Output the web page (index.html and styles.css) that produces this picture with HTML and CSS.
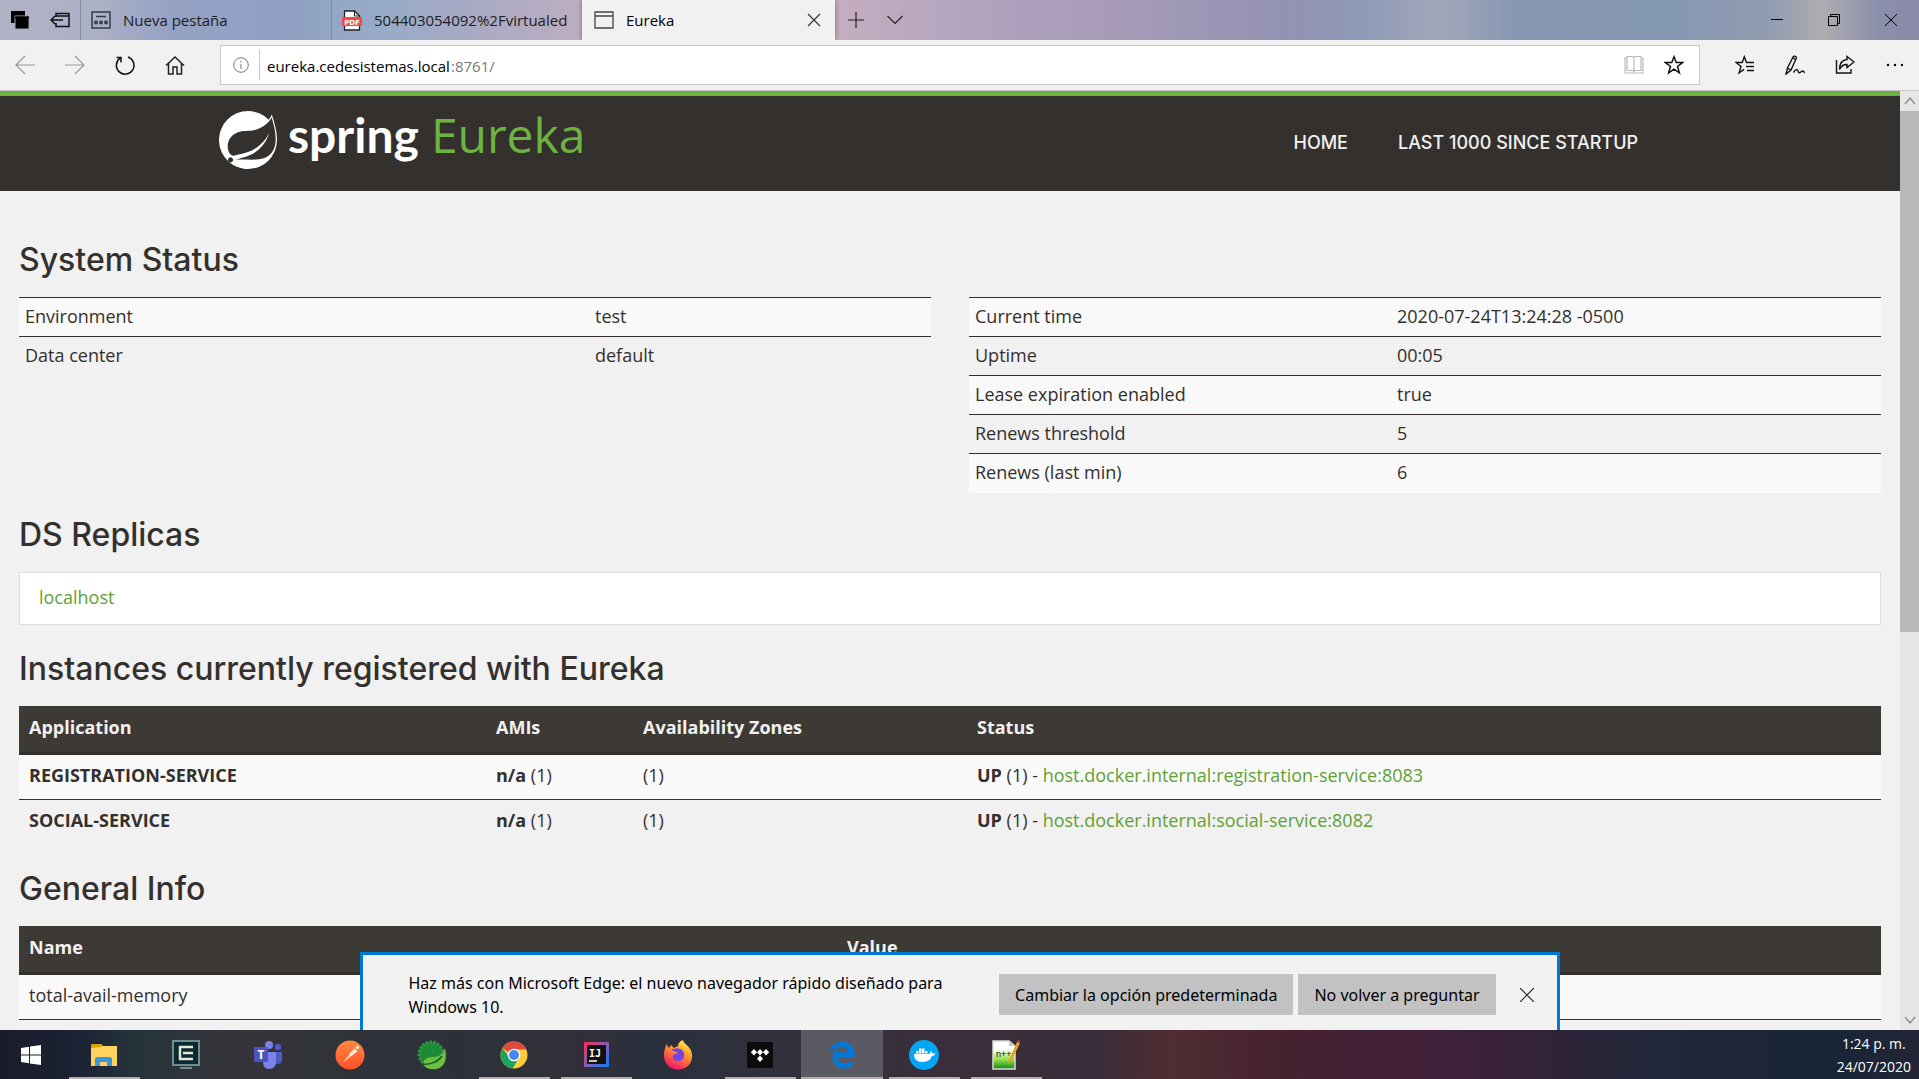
FILE: index.html
```html
<!DOCTYPE html>
<html lang="es">
<head>
<meta charset="utf-8">
<title>Eureka</title>
<link rel="stylesheet" href="styles.css">
</head>
<body>
<header class="tabs">
  <div class="tab-tools">
    <button class="icon-btn" aria-label="Pestañas reservadas"><svg width="20" height="20" viewBox="0 0 20 20"><path d="M1 1h14v12H1z"/><path d="M5 6h14v13H5z" stroke="#9fa5bb" stroke-width="1"/><path d="M5 7.500h14" stroke="#000" stroke-width="2"/></svg></button>
    <button class="icon-btn" aria-label="Reservar pestañas"><svg width="20" height="20" viewBox="0 0 20 20" fill="none" stroke="#111" stroke-width="1.500"><path d="M6 7V3.500h13v13H6V13M6 6h13M1 10h12M5 6l-4 4 4 4"/></svg></button>
  </div>
  <button class="tab">
    <svg width="20" height="18" viewBox="0 0 20 18" fill="none" stroke="#333a4c" stroke-width="1.500"><path d="M1 1h18v16H1zM5 5.500h10"/><path d="M4 10.500h2v2H4zM9 10.500h2v2H9zM14 10.500h2v2h-2z"/></svg>
    <span class="tab-title">Nueva pestaña</span>
  </button>
  <button class="tab">
    <svg width="20" height="21" viewBox="0 0 20 21"><path d="M2.500 1h10l5 5v14h-15z" fill="#fff" stroke="#222" stroke-width="1.300"/><path d="M12.500 1v5h5" fill="none" stroke="#222"/><path d="M0 7h20v9H0z" fill="#f5484b"/><text x="10" y="14.500" font-family="DejaVu Sans" font-weight="bold" font-size="7" fill="#fff" text-anchor="middle">PDF</text></svg>
    <span class="tab-title">504403054092%2Fvirtualed</span>
  </button>
  <div class="tab tab-active">
    <svg width="20" height="18" viewBox="0 0 20 18" fill="none" stroke="#444" stroke-width="1.300"><path d="M1 1h18v16H1zM1 5h18"/></svg>
    <span class="tab-title">Eureka</span>
    <button class="icon-btn tab-close" aria-label="Cerrar pestaña"><svg width="14" height="14" viewBox="0 0 14 14" fill="none" stroke="#333" stroke-width="1.200"><path d="M1 1l12 12M13 1L1 13"/></svg></button>
  </div>
  <div class="tab-new">
    <button class="icon-btn" aria-label="Nueva pestaña"><svg width="18" height="18" viewBox="0 0 18 18" fill="none" stroke="#222" stroke-width="1.200"><path d="M9 1v16M1 9h16"/></svg></button>
    <button class="icon-btn" aria-label="Vistas previas"><svg width="18" height="18" viewBox="0 0 18 18" fill="none" stroke="#222" stroke-width="1.200"><path d="M1.500 5L9 12.500 16.500 5"/></svg></button>
  </div>
  <div class="window-tools">
    <button class="icon-btn" aria-label="Minimizar"><svg width="12" height="12" viewBox="0 0 12 12" stroke="#000"><path d="M0 5.500h12"/></svg></button>
    <button class="icon-btn" aria-label="Restaurar"><svg width="12" height="12" viewBox="0 0 12 12" fill="none" stroke="#000"><path d="M.5 2.500h9v9h-9zM2.500 2.500v-2h9v9h-2"/></svg></button>
    <button class="icon-btn" aria-label="Cerrar"><svg width="12" height="12" viewBox="0 0 12 12" stroke="#000"><path d="M0 0l12 12M12 0L0 12"/></svg></button>
  </div>
</header>

<div class="toolbar">
  <div class="nav-tools">
    <button class="icon-btn" aria-label="Atrás"><svg width="20" height="20" viewBox="0 0 20 20" fill="none" stroke="#999" stroke-width="1.200"><path d="M20 10H1M10 1l-9 9 9 9"/></svg></button>
    <button class="icon-btn" aria-label="Adelante"><svg width="20" height="20" viewBox="0 0 20 20" fill="none" stroke="#999" stroke-width="1.200"><path d="M0 10h19M10 1l9 9-9 9"/></svg></button>
    <button class="icon-btn" aria-label="Actualizar"><svg width="20" height="20" viewBox="0 0 20 20" fill="none" stroke="#111" stroke-width="1.500"><path d="M5 3.200A8.800 8.800 0 1 0 13 2M1.500 2.500h4.500v5"/></svg></button>
    <button class="icon-btn" aria-label="Inicio"><svg width="20" height="20" viewBox="0 0 20 20" fill="none" stroke="#222" stroke-width="1.500"><path d="M1 10.500L10 2l9 8.500M3.500 8.500V19H8v-7h4v7h4.500V8.500"/></svg></button>
  </div>
  <div class="address">
    <svg class="info" width="16" height="16" viewBox="0 0 16 16" fill="none" stroke="#777"><circle cx="8" cy="8" r="7.300"/><path d="M8 7v5M8 4v1.500"/></svg>
    <div class="address-text">
      <input class="address-input" aria-label="Dirección" value="eureka.cedesistemas.local"><span class="address-port">:8761/</span>
    </div>
    <button class="icon-btn" aria-label="Vista de lectura"><svg width="20" height="20" viewBox="0 0 20 20" fill="none" stroke="#bbb" stroke-width="1.200"><path d="M3 3H1v15h18V3h-2M3 1.500h6l1 1 1-1h6v14h-6l-1 1-1-1H3zM10 2.500v15"/></svg></button>
    <button class="icon-btn" aria-label="Favorito"><svg width="20" height="20" viewBox="0 0 20 20" fill="none" stroke="#111" stroke-width="1.500"><path d="M10 1.800l2.200 5.800h6.300l-5 3.900 1.900 6.400L10 14.200l-5.400 3.700 1.900-6.400-5-3.900h6.300z"/></svg></button>
  </div>
  <div class="page-tools">
    <button class="icon-btn" aria-label="Centro"><svg width="20" height="20" viewBox="0 0 20 20" fill="none" stroke="#111" stroke-width="1.400"><path d="M19 7.500h-7.500L9.300 1.800 7.200 7.500H1l5 4-1.900 6.400 5-3.500M11 11.500h8M12 15.500h7"/></svg></button>
    <button class="icon-btn" aria-label="Notas"><svg width="20" height="20" viewBox="0 0 20 20" fill="none" stroke="#111" stroke-width="1.400"><path d="M1 19l1.500-6L8 2c1-1.500 4-.5 3.200 1.500L6 15zM7 2.500l3.500 2M2.500 13L6 15M1 19l5-4M8.500 17.500c2-3 4-4 4.500-1.500s2 2 3.500.5 2.500 1 3.500 1"/></svg></button>
    <button class="icon-btn" aria-label="Compartir"><svg width="20" height="20" viewBox="0 0 20 20" fill="none" stroke="#111" stroke-width="1.400"><path d="M1.500 5v13H16v-4M12 1.500l7 5.500-7 5.500v-3c-4 0-6 1.500-7.500 5 0-6 2.500-9.500 7.500-10z"/></svg></button>
    <button class="icon-btn" aria-label="Más"><svg width="20" height="20" viewBox="0 0 20 20"><circle cx="3" cy="10" r="1.200"/><circle cx="10" cy="10" r="1.200"/><circle cx="17" cy="10" r="1.200"/></svg></button>
  </div>
</div>

<div class="viewport">
  <div class="page">
    <nav class="site-header">
      <div class="site-container">
        <a class="brand" href="#">
          <svg width="58" height="58" viewBox="0 0 24 24" fill="#fff"><path d="M21.854 1.416a10.450 10.450 0 0 1-1.284 2.247A11.967 11.967 0 1 0 3.852 20.776l.4445.3951a11.954 11.954 0 0 0 19.632-8.297c.3457-3.013-.568-6.865-2.074-11.458zM5.580 20.875a1.017 1.017 0 1 1-.1482-1.432 1.040 1.040 0 0 1 .1482 1.432zm16.199-3.581c-2.939 3.926-9.260 2.593-13.285 2.790 0 0-.7161.0494-1.432.1481 0 0 .2717-.1234.6174-.2469 2.840-.9877 4.173-1.185 5.902-2.074 3.235-1.655 6.470-5.284 7.112-9.038-1.235 3.605-4.988 6.717-8.396 7.976-2.346.8643-6.569 1.704-6.569 1.704l-.1729-.0988c-2.865-1.408-2.963-7.630 2.272-9.631 2.297-.889 4.470-.395 6.964-.9877 2.642-.6174 5.704-2.593 6.939-5.186 1.383 4.173 3.062 10.643.0493 14.643z"/></svg>
          <span class="brand-spring">spring</span>
          <span class="brand-eureka">Eureka</span>
        </a>
        <div class="site-nav">
          <a href="#">HOME</a>
          <a href="#">LAST 1000 SINCE STARTUP</a>
        </div>
      </div>
    </nav>
    <main class="content">
      <h1>System Status</h1>
      <div class="status">
        <table class="facts facts-left">
          <tr><td>Environment</td><td>test</td></tr>
          <tr><td>Data center</td><td>default</td></tr>
        </table>
        <table class="facts facts-right">
          <tr><td>Current time</td><td>2020-07-24T13:24:28 -0500</td></tr>
          <tr><td>Uptime</td><td>00:05</td></tr>
          <tr><td>Lease expiration enabled</td><td>true</td></tr>
          <tr><td>Renews threshold</td><td>5</td></tr>
          <tr><td>Renews (last min)</td><td>6</td></tr>
        </table>
      </div>
      <h1>DS Replicas</h1>
      <ul class="replicas"><li><a href="#">localhost</a></li></ul>
      <h1>Instances currently registered with Eureka</h1>
      <table class="data instances">
        <thead><tr><th>Application</th><th>AMIs</th><th>Availability Zones</th><th>Status</th></tr></thead>
        <tbody>
          <tr><td><b>REGISTRATION-SERVICE</b></td><td><b>n/a</b> (1)</td><td>(1)</td><td><b>UP</b> (1) - <a href="#">host.docker.internal:registration-service:8083</a></td></tr>
          <tr><td><b>SOCIAL-SERVICE</b></td><td><b>n/a</b> (1)</td><td>(1)</td><td><b>UP</b> (1) - <a href="#">host.docker.internal:social-service:8082</a></td></tr>
        </tbody>
      </table>
      <h1>General Info</h1>
      <table class="data general">
        <thead><tr><th>Name</th><th>Value</th></tr></thead>
        <tbody>
          <tr><td>total-avail-memory</td><td></td></tr>
          <tr><td></td><td></td></tr>
        </tbody>
      </table>
    </main>
  </div>
  <div class="scrollbar">
    <svg class="scroll-arrow" width="19" height="20" viewBox="0 0 19 20" fill="none" stroke="#888" stroke-width="1.300"><path d="M5 13l5-6 5 6"/></svg>
    <div class="scroll-thumb"></div>
    <svg class="scroll-arrow scroll-down" width="19" height="20" viewBox="0 0 19 20" fill="none" stroke="#888" stroke-width="1.300"><path d="M5 7l5 6 5-6"/></svg>
  </div>
  <div class="notice">
    <p class="notice-text">Haz más con Microsoft Edge: el nuevo navegador rápido diseñado para Windows 10.</p>
    <div class="notice-actions">
      <button class="notice-btn">Cambiar la opción predeterminada</button>
      <button class="notice-btn">No volver a preguntar</button>
    </div>
    <button class="icon-btn" aria-label="Cerrar aviso"><svg width="14" height="14" viewBox="0 0 14 14" fill="none" stroke="#222" stroke-width="1.200"><path d="M0 0l14 14M14 0L0 14"/></svg></button>
  </div>
</div>

<footer class="taskbar">
  <button class="task task-start" aria-label="Inicio de Windows"><svg width="20" height="20" viewBox="0 0 20 20" fill="#fff"><path d="M0 3l8-1.200v7.700H0zM9 1.600L20 0v9.500H9zM0 10.500h8v7.700L0 17zM9 10.500h11V20L9 18.400z"/></svg></button>
  <button class="task task-open" aria-label="Explorador"><svg width="26" height="24" viewBox="0 0 26 24"><path d="M0 1h10l2 2h14v20H0z" fill="#ffd45e"/><path d="M0 1h10l1 1v2L0 5z" fill="#e0a100"/><path d="M4 23v-7q0-2 2-2h13q2 0 2 2v7h-5v-4H9v4z" fill="#3a97dc"/></svg></button>
  <button class="task" aria-label="Consola"><svg width="28" height="30" viewBox="0 0 28 30"><path d="M1 1h26v24H1z" fill="#082a33" stroke="#6f8d92" stroke-width="2"/><path d="M8 28h12" stroke="#6f8d92" stroke-width="2"/><path d="M21 7H8v12h13M11 13h10" fill="none" stroke="#e9e5d4" stroke-width="2.500"/></svg></button>
  <button class="task" aria-label="Teams"><svg width="28" height="28" viewBox="0 0 28 28"><circle cx="24" cy="6" r="3.200" fill="#5059c9"/><path d="M19 11h9v8q0 4-5 4h-4z" fill="#5059c9"/><circle cx="15" cy="4" r="4" fill="#7b83eb"/><path d="M9 11h13v9q0 8-7 8-6 0-6-7z" fill="#7b83eb"/><rect y="6" width="14" height="15" rx="1" fill="#4b53bc"/><text x="7" y="18" font-family="Open Sans" font-weight="bold" font-size="12" fill="#fff" text-anchor="middle">T</text></svg></button>
  <button class="task" aria-label="Postman"><svg width="30" height="30" viewBox="0 0 30 30"><defs><linearGradient id="pm" x2="0" y2="1"><stop stop-color="#ff8a3d"/><stop offset="1" stop-color="#ff4f28"/></linearGradient></defs><circle cx="15" cy="15" r="14.500" fill="url(#pm)"/><path d="M7 23.500l8-9.500 1.500 1.500z" fill="#ffe2d2"/><path d="M14.500 14l5-5 2.500 2-6 5z" fill="#ffe2d2" stroke="#fff" stroke-width=".8"/><circle cx="22.500" cy="7.500" r="1.800" fill="#ffe2d2"/></svg></button>
  <button class="task" aria-label="Spring Tools"><svg width="30" height="30" viewBox="0 0 30 30"><circle cx="14" cy="14" r="12" fill="#1f8a35" stroke="#2e9a3c" stroke-width="3" stroke-dasharray="2.500 1.400"/><path d="M28 8c2 10 1 18-8 21-6 1-11 0-13-4-2-6 4-8 10-8 5 0 9-3 11-9z" fill="#6fbe44"/><path d="M5 24c8 1 16-2 20-8" fill="none" stroke="#15602a" stroke-width="1.500"/></svg></button>
  <button class="task task-open" aria-label="Chrome"><svg width="28" height="28" viewBox="0 0 28 28"><circle cx="14" cy="14" r="13.500" fill="#ffcd40"/><path d="M14 14L2.300 7.200A13.500 13.500 0 0 1 26.400 8.500H14z" fill="#dd4b3e"/><path d="M2.300 7.200A13.500 13.500 0 0 0 12.500 27.400L19 17l-8 1z" fill="#1aa260"/><circle cx="14" cy="14" r="6.300" fill="#fff"/><circle cx="14" cy="14" r="5" fill="#4688f1"/></svg></button>
  <button class="task task-open" aria-label="IntelliJ IDEA"><svg width="25" height="25" viewBox="0 0 25 25"><defs><linearGradient id="ij" y2="1"><stop stop-color="#fe2857"/><stop offset=".5" stop-color="#8a5bb0"/><stop offset="1" stop-color="#087cfa"/></linearGradient></defs><path d="M0 0h25v25H0z" fill="url(#ij)"/><path d="M3 3h19v19H3z" fill="#111"/><text x="5" y="15" font-family="DejaVu Sans Mono" font-weight="bold" font-size="10" fill="#fff">IJ</text><path d="M5 19h8" stroke="#fff" stroke-width="1.500"/></svg></button>
  <button class="task" aria-label="Firefox"><svg width="30" height="30" viewBox="0 0 30 30"><defs><linearGradient id="ff" x1=".8" x2=".3" y2="1"><stop stop-color="#fff44f"/><stop offset=".4" stop-color="#ff9a2a"/><stop offset="1" stop-color="#f3106b"/></linearGradient></defs><path d="M1 15C1 9 3 8 3 4l3 4 2-3 3 3c2-1 3-2 4-1 0-4 2-6 5-7 0 4 8 6 9 14 1 9-5 15.500-14 15.500S1 23 1 15z" fill="url(#ff)"/><path d="M8 10c4-2 9-3 12 1 3 5 0 10-5 10-4 0-6-3-5-6l5-2c-2-2-4-1-7-3z" fill="#7542e5"/></svg></button>
  <button class="task task-open" aria-label="Tidal"><svg width="26" height="26" viewBox="0 0 26 26"><rect width="26" height="26" rx="2" fill="#0b0b0b"/><path d="M7 7l3 3.200L7 13.500 3.800 10.200zM13 7l3 3.200-3 3.300-3-3.300zM19 7l3.200 3.200L19 13.500l-3-3.300zM13 13.500l3 3.200-3 3.300-3-3.300z" fill="#fff"/></svg></button>
  <button class="task task-open task-active" aria-label="Edge"><svg width="26" height="28" viewBox="20 0 470 512"><path fill="#0078d7" d="M25.714 228.163c.111-.162.23-.323.342-.485-.021.162-.045.323-.065.485h-.277zm460.572 15.508c0-44.032-7.754-84.465-28.801-122.405C416.498 47.879 343.912 8.001 258.893 8.001 118.962 7.724 40.617 113.214 26.056 227.679c42.429-61.312 117.073-121.376 220.375-124.966 0 0 109.666 0 99.419 104.957H169.997c6.369-37.386 18.554-58.986 34.339-78.926-75.048 34.893-121.850 96.096-120.742 188.315.83 71.448 50.124 144.836 120.743 171.976 83.357 31.847 192.776 7.200 240.132-21.324V363.307c-80.864 56.494-270.871 60.925-272.255-67.572h314.073v-52.064z"/></svg></button>
  <button class="task task-open" aria-label="Docker"><svg width="30" height="30" viewBox="0 0 30 30"><circle cx="15" cy="15" r="15" fill="#03a6f4"/><path d="M5 14h15q2-1 1.500-3 2 .5 2 2.500l3 0q-1 2.500-3.500 2.500-2 6-10 6-8 0-8-8zM7 11h2.500v2.500H7zM10 11h2.500v2.500H10zM13 11h2.500v2.500H13zM16 11h2.500v2.500H16zM10 8.500h2.500V11H10zM13 8.500h2.500V11H13z" fill="#fff"/></svg></button>
  <button class="task task-open" aria-label="Notepad++"><svg width="28" height="30" viewBox="0 0 28 30"><defs><linearGradient id="np" x2="0" y2="1"><stop offset=".3" stop-color="#fff"/><stop offset=".65" stop-color="#9be04c"/><stop offset="1" stop-color="#0a8a16"/></linearGradient></defs><path d="M1 1h16l6 5v23H1z" fill="url(#np)" stroke="#ddd" stroke-width="1.500"/><path d="M17 1v5h6" fill="#ccc"/><text x="4" y="17" font-family="Liberation Sans" font-size="9" fill="#111">n++</text><path d="M16 24l1.500-5L25 2l3 1-8 17z" fill="#e8a21c"/><path d="M25 2l1-2 3 1-1 2z" fill="#c33"/></svg></button>
  <div class="clock"><time>1:24 p. m.</time><time>24/07/2020</time></div>
</footer>
</body>
</html>
```

FILE: styles.css
```css
* { box-sizing: border-box; }
body {
  margin: 0;
  height: 100vh;
  display: flex;
  flex-direction: column;
  overflow: hidden;
  font-family: "Open Sans", sans-serif;
  background: #f1f1f1;
}
button { font: inherit; color: inherit; border: 0; background: none; padding: 0; }
svg { display: block; flex: none; }
a { text-decoration: none; }
.icon-btn { display: flex; align-items: center; justify-content: center; flex: none; }

/* Browser tabs */
.tabs {
  display: flex;
  flex: none;
  height: 40px;
  font-size: 15px;
  background: linear-gradient(90deg, #b1b2c5 0, #adb1c5 5%, #94a1c4 9%, #8fa0c2 15%, #97acc8 20%, #a5a9c4 24%, #c0aebf 31%, #c4adc0 44%, #b3a4bf 50%, #a79bb9 58%, #9392b2 67%, #8e9ab8 71%, #a1a7b8 75%, #8797b2 79%, #8498b3 87%, #919bb0 92%, #adadb1 95%, #8a8eaa 98%, #8b8aa8 100%);
}
.tab-tools { display: flex; gap: 20px; padding: 0 10px; width: 80px; }
.tab { display: flex; align-items: center; flex: none; width: 251px; padding: 0 10px; border-left: 1px solid #7f8aa5; text-align: left; white-space: nowrap; }
.tab-title { flex: 1; margin-left: 12px; overflow: hidden; color: #1b1d24; }
.tab-active { width: 253px; background: #f1f1f1; border-left: 0; padding: 0 14px 0 12px; box-shadow: 0 0 5px #0006; clip-path: inset(0 -6px); }
.tab-active .tab-title { color: #000; }
.tab-new { display: flex; gap: 21px; padding-left: 12px; }
.window-tools { display: flex; gap: 45px; margin-left: auto; padding-right: 22px; }

/* Address bar */
.toolbar { display: flex; flex: none; align-items: center; height: 51px; border-bottom: 1px solid #c8c8c8; padding: 0 14px 0 15px; }
.nav-tools { display: flex; gap: 30px; width: 205px; }
.address { display: flex; flex: 1; align-items: center; height: 40px; background: #fff; border: 1px solid #c6c6c6; padding: 0 15px 0 12px; gap: 20px; }
.info { margin-right: -10px; }
.address-text { display: flex; flex: 1; align-items: center; height: 30px; border-left: 1px solid #c6c6c6; padding: 2px 0 0 7px; font-size: 15px; }
.address-input { width: 184px; border: 0; padding: 0; background: none; font: inherit; color: #000; }
.address-port { color: #777; }
.page-tools { display: flex; gap: 30px; padding-left: 35px; }

/* Page area */
.viewport { position: relative; display: flex; flex: 1; min-height: 0; overflow: hidden; }
.page { flex: 1; overflow: hidden; color: #34302d; font-size: 18px; line-height: 24px; }
.site-header { background: #34302d; border-top: 5px solid #6db33f; height: 100px; }
.site-container { display: flex; justify-content: space-between; align-items: flex-start; max-width: 1462px; margin: 0 auto; padding-top: 15px; }
.brand { display: flex; align-items: flex-start; height: 58px; line-height: 48px; }
.brand-spring { margin-left: 11px; font-family: Lato, sans-serif; font-weight: 700; font-size: 48px; color: #fff; }
.brand-eureka { margin-left: 12px; font-size: 48px; color: #6db33f; }
.site-nav { display: flex; gap: 50px; padding: 20px 43px 0 0; font-family: Inter, sans-serif; font-weight: 500; font-size: 18px; }
.site-nav a { color: #f1f1f1; }
.content { padding: 48px 19px 0; }
h1 { margin: 0; padding: 2px 0 18px; font: 500 32px/38px Inter, sans-serif; }
.content a { color: #5fa134; }
table { border-collapse: collapse; width: 100%; table-layout: fixed; }
td, th { text-align: left; vertical-align: top; }
.status { display: grid; grid-template-columns: 1fr 1fr; gap: 38px; align-items: start; margin-bottom: 21px; }
.facts tr { height: 39px; border-top: 1px solid #34302d; }
.facts tr:nth-child(odd), .data tbody tr:nth-child(odd) { background: #f9f9f9; }
.facts td { padding: 6px; }
.facts-left td:first-child { width: 570px; }
.facts-right td:first-child { width: 422px; }
.replicas { margin: 0 0 23px; padding: 12px 19px 15px; list-style: none; background: #fff; border: 1px solid #ddd; }
.data th { height: 48px; padding: 9px 10px; background: #3d3934; border-bottom: 3px solid #34302d; color: #f1f1f1; }
.data td { height: 46px; padding: 8px 10px; }
.data tbody tr + tr { border-top: 1px solid #34302d; }
.data b, .data th { font-weight: 700; }
.instances { margin-bottom: 22px; }
.instances th:nth-child(1) { width: 467px; }
.instances th:nth-child(2) { width: 147px; }
.instances th:nth-child(3) { width: 334px; }
.general th:first-child { width: 818px; }

.scrollbar { width: 19px; display: flex; flex-direction: column; background: #e6e6e6; }
.scroll-thumb { height: 521px; background: #b8b8b8; }
.scroll-down { margin-top: auto; }

/* Default-browser notice */
.notice {
  position: absolute;
  bottom: 0;
  left: 50%;
  translate: -50% 0;
  display: flex;
  align-items: flex-start;
  width: 1200px;
  height: 78px;
  padding: 16px 23px 0 46px;
  border: 3px solid #0078d7;
  border-bottom: 0;
  background: #f2f2f2;
  color: #000;
  font-family: "Noto Sans", sans-serif;
  font-size: 16px;
  line-height: 24px;
}
.notice-text { flex: 1; margin: 0; padding-right: 20px; }
.notice-actions { display: flex; gap: 5px; padding-top: 3px; margin-right: 24px; }
.notice-btn { height: 41px; padding: 0 16px; background: #c2c2c2; }
.notice .icon-btn { height: 48px; }

/* Windows taskbar */
.taskbar {
  display: flex;
  flex: none;
  height: 49px;
  background: linear-gradient(90deg, #1b1c2a 0, #1b2233 4%, #25333b 7%, #35343a 12%, #2f3338 18%, #2c3138 24%, #322f38 29%, #2a303d 34%, #33303c 42%, #3b2d3a 50%, #3a2b39 57%, #502d33 61%, #47222f 66%, #40203a 75%, #302338 81%, #20283a 87%, #1a2537 93%, #182536 96%, #232535 100%);
}
.task { display: flex; align-items: center; justify-content: center; width: 82px; flex: none; }
.task-start { width: 61px; margin-right: 2px; }
.task-open { background: linear-gradient(#b3adae, #b3adae) center bottom / 71px 2px no-repeat; }
.task-active { background-color: #5b5962; background-size: 82px 2px; }
.clock { display: flex; flex-direction: column; justify-content: center; margin-left: auto; padding-right: 8px; color: #fff; font-size: 14px; line-height: 23px; text-align: center; }
```
